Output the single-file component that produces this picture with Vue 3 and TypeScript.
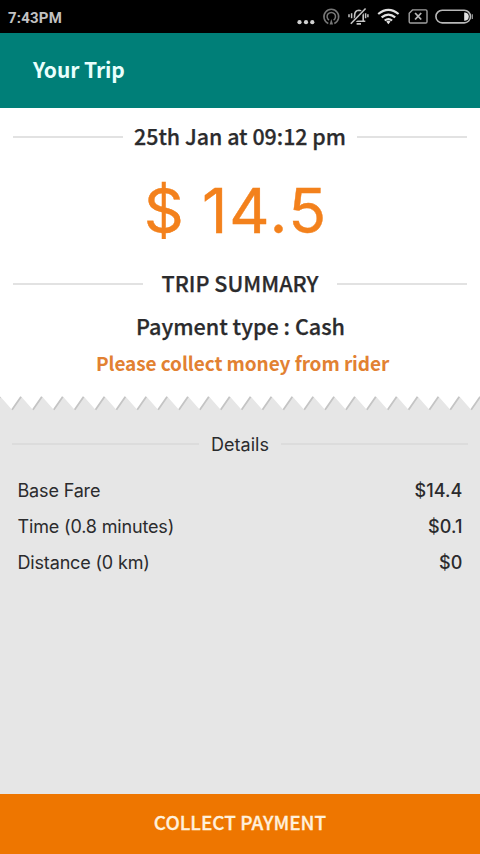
<script setup lang="ts">
interface FareLine {
  label: string
  amount: string
}

const fares: FareLine[] = [
  { label: 'Base Fare', amount: '$14.4' },
  { label: 'Time (0.8 minutes)', amount: '$0.1' },
  { label: 'Distance (0 km)', amount: '$0' },
]

// Torn receipt edge: teeth of equal width running across the full page.
const toothWidth = 20.87
const teeth = Array.from({ length: 24 }, (_, i) => 12 - toothWidth + i * toothWidth)
const edgePath =
  'M-10 0' + teeth.map((x) => `L${x.toFixed(2)} 15.8L${(x + 9.2).toFixed(2)} 2.5`).join('') + 'L500 0Z'
const shadePath = teeth.map((x) => `M${x.toFixed(2)} 15.8L${(x + 9).toFixed(2)} 2.8`).join('')
</script>

<template>
  <div class="screen">
    <div class="status">
      <span class="clock">7:43PM</span>
      <svg class="status-icons" width="190" height="33" viewBox="0 0 190 33" fill="none">
        <g fill="#d0d0d0">
          <circle cx="9.5" cy="22.2" r="2.1" />
          <circle cx="16" cy="22.2" r="2.1" />
          <circle cx="22.3" cy="22.2" r="2.1" />
        </g>
        <g stroke="#777" stroke-width="1.5">
          <path d="M38.3 23.5A7.4 7.4 0 1 1 44.3 23.5" />
          <path d="M39 20.1A4.2 4.2 0 1 1 43.6 20.1" />
          <path d="M41.3 19L39.6 24.5H43Z" fill="#777" stroke="none" />
        </g>
        <g stroke="#c4c4c4" stroke-width="1.6">
          <path d="M62.8 21.3H75.3M64.6 20.8V15.2Q64.8 10.6 68.9 10.3Q73 10.6 73.2 15.2V20.8M66.6 23.9H71" />
          <path d="M75.5 8.6L61.5 24" stroke="#000" stroke-width="3.6" />
          <path d="M75.6 8.5L60.8 23.8" />
          <path d="M61.6 13.2V18.2M59 14.2V17.2M75.6 13.2V18.2M77.9 14.2V17.2" stroke-width="1.5" />
        </g>
        <g stroke="#e0e0e0" stroke-width="2.2">
          <path d="M88.2 14Q98.4 5.6 108.6 14" />
          <path d="M91.6 17.4Q98.4 11.7 105.2 17.4" />
          <path d="M94.7 20.5Q98.4 17.6 102.1 20.5" />
          <path d="M96.2 21.6Q98.4 20 100.6 21.6L98.4 24.2Z" fill="#e0e0e0" stroke="none" />
        </g>
        <path d="M122.5 9.9H135.7Q137 9.9 137 11.2V21.7Q137 23 135.7 23H120.5Q119.2 23 119.2 21.7V13.2Z" stroke="#a0a0a0" stroke-width="1.4" />
        <path d="M125.1 13L131.2 19.5M131.2 13L125.1 19.5" stroke="#b8b8b8" stroke-width="1.8" />
        <rect x="145.9" y="10.3" width="34.6" height="12.6" rx="6.3" stroke="#b8b8b8" stroke-width="1.6" />
        <path d="M174.2 12.4H175Q178.8 12.8 178.8 16.6Q178.8 20.4 175 20.8H174.2Z" fill="#e4e4e4" />
        <path d="M182.3 14.2V19" stroke="#a0a0a0" stroke-width="1.2" />
      </svg>
    </div>

    <header class="toolbar"><h1>Your Trip</h1></header>

    <main class="summary">
      <div class="ruled date"><span>25th Jan at 09:12 pm</span></div>
      <div class="total">$ 14.5</div>
      <div class="ruled heading"><span>TRIP SUMMARY</span></div>
      <p class="payment">Payment type : Cash</p>
      <p class="notice">Please collect money from rider</p>
    </main>

    <section class="details">
      <svg class="edge" width="480" height="18" viewBox="0 0 480 18">
        <path :d="edgePath" fill="#fff" />
        <path :d="shadePath" fill="none" stroke="#c4c4c4" stroke-width="1.8" />
      </svg>
      <div class="ruled details-title"><span>Details</span></div>
      <ul>
        <li v-for="fare in fares" :key="fare.label">
          <span>{{ fare.label }}</span>
          <span class="amount">{{ fare.amount }}</span>
        </li>
      </ul>
    </section>

    <button class="collect" type="button">COLLECT PAYMENT</button>
  </div>
</template>

<style>
body {
  margin: 0;
}
</style>

<style scoped>
.screen {
  display: flex;
  flex-direction: column;
  width: 480px;
  height: 854px;
  overflow: hidden;
  background: #fff;
  color: #2b2b2d;
  font-family: 'Noto Sans CJK SC', sans-serif;
  font-weight: 500;
}
.status {
  display: flex;
  flex: none;
  align-items: center;
  justify-content: space-between;
  height: 33px;
  padding-left: 8px;
  background: #000;
}
.clock {
  padding-top: 2px;
  color: #c2c2c2;
  font: 700 15px/20px Roboto, sans-serif;
  letter-spacing: 0.2px;
}
.status-icons {
  display: block;
}
.toolbar {
  display: flex;
  box-sizing: border-box;
  flex: none;
  align-items: center;
  height: 75px;
  padding: 0 0 4px 33px;
  background: #007f78;
}
h1 {
  margin: 0;
  color: #e9fffd;
  font-size: 21px;
  font-weight: 700;
  letter-spacing: -0.1px;
  line-height: 32px;
}
.summary {
  display: flex;
  flex: none;
  flex-direction: column;
  height: 286px;
  text-align: center;
}
.ruled {
  display: flex;
  align-items: center;
  padding: 0 13px;
}
.ruled::before,
.ruled::after {
  flex: 1;
  height: 2px;
  background: #e2e2e2;
  content: '';
}
.ruled span {
  white-space: nowrap;
}
.date,
.heading,
.payment {
  -webkit-text-stroke: 0.25px currentColor;
}
.date {
  height: 58px;
  font-size: 21.4px;
}
.date span {
  padding: 0 11px 4px;
}
.total {
  height: 89px;
  padding-right: 8px;
  color: #f3811c;
  font: 400 62.5px/89px Inter, sans-serif;
  letter-spacing: 1.8px;
  word-spacing: -3px;
  -webkit-text-stroke: 0.4px currentColor;
}
.heading {
  height: 58px;
  font-size: 21.6px;
}
.heading span {
  padding: 0 18px 4px;
}
p {
  margin: 0;
}
.payment {
  height: 28px;
  padding-left: 1px;
  font-size: 21.6px;
  line-height: 26px;
}
.notice {
  height: 46px;
  padding-left: 5px;
  color: #e28132;
  font-size: 19px;
  font-weight: 700;
  letter-spacing: -0.08px;
  line-height: 44px;
}
.details {
  flex: 1;
  background: #e6e6e6;
  font-family: Inter, sans-serif;
  font-weight: 400;
}
.edge {
  display: block;
}
.details-title {
  height: 64px;
  padding: 0 12px;
  font-size: 18px;
}
.details-title::before,
.details-title::after {
  background: #dcdcdc;
}
.details-title span {
  padding: 0 12px;
}
ul {
  margin: -4px 0 0;
  padding: 0 17.5px;
  list-style: none;
}
li {
  display: flex;
  align-items: center;
  justify-content: space-between;
  height: 36px;
  font-size: 18px;
  letter-spacing: -0.16px;
}
.amount {
  font-weight: 500;
  letter-spacing: 0.1px;
}
.collect {
  box-sizing: border-box;
  flex: none;
  height: 60px;
  padding: 0 0 4px;
  border: 0;
  background: #ee7600;
  color: #fff0dc;
  font: 500 19px/56px 'Noto Sans CJK SC', sans-serif;
  -webkit-text-stroke: 0.3px currentColor;
}
</style>
